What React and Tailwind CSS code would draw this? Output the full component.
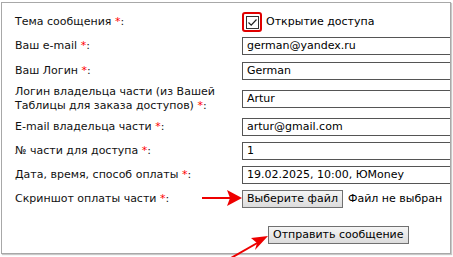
const font = { fontFamily: '"DejaVu Sans", Verdana, sans-serif' };

function Req() {
    return <span className="text-[#ff0000]">*</span>;
}

function Row({ label, children, h = 'h-[18px]' }) {
    return (
        <div className={`grid grid-cols-[227px_1fr] items-center ${h}`}>
            <div className="leading-[14px]">{label}</div>
            <div className="flex items-center whitespace-nowrap">{children}</div>
        </div>
    );
}

function Field({ value }) {
    return (
        <div className="flex h-[18px] w-[260px] shrink-0 items-center border border-[#555] bg-white pl-[4px] text-black">
            {value}
        </div>
    );
}

const btn =
    'flex h-[18px] shrink-0 items-center whitespace-nowrap border border-[#707070] bg-gradient-to-b from-[#f5f5f5] to-[#dcdcdc] px-[4px] text-black';

export default function App() {
    return (
        <div className="relative h-[257px] w-[453px] overflow-hidden bg-white text-[11px] text-[#111]" style={font}>
            <div className="ml-[1px] mt-[2px] h-[252px] w-[450px] overflow-hidden border border-[#a8a8a8] pl-[13px] pt-[9px] shadow-[1px_1px_1px_#c8c8c8]">
                <div className="flex flex-col">
                    <Row label={<>Тема сообщения <Req />:</>} h="h-[20px]">
                        <div className="flex h-[20px] w-[20px] items-center justify-center rounded-[3px] border-2 border-[#e00000]">
                            <div className="flex h-[13px] w-[13px] items-center justify-center border border-[#333] bg-white">
                                <svg width="11" height="11" viewBox="0 0 11 11">
                                    <path d="M1.5 5.5 L4.2 8.2 L9.5 2.5" fill="none" stroke="#222" strokeWidth="1.2" />
                                </svg>
                            </div>
                        </div>
                        <span className="ml-[4px] text-black">Открытие доступа</span>
                    </Row>
                    <div className="mt-[5px]">
                        <Row label={<>Ваш e-mail <Req />:</>}>
                            <Field value="german@yandex.ru" />
                        </Row>
                    </div>
                    <div className="mt-[7px]">
                        <Row label={<>Ваш Логин <Req />:</>}>
                            <Field value="German" />
                        </Row>
                    </div>
                    <div className="mt-[5px]">
                        <Row
                            label={
                                <>
                                    Логин владельца части (из Вашей
                                    <br />
                                    Таблицы для заказа доступов) <Req />:
                                </>
                            }
                            h="h-[28px]"
                        >
                            <Field value="Artur" />
                        </Row>
                    </div>
                    <div className="mt-[5px]">
                        <Row label={<>E-mail владельца части <Req />:</>}>
                            <Field value="artur@gmail.com" />
                        </Row>
                    </div>
                    <div className="mt-[6px]">
                        <Row label={<>№ части для доступа <Req />:</>}>
                            <Field value="1" />
                        </Row>
                    </div>
                    <div className="mt-[6px]">
                        <Row label={<>Дата, время, способ оплаты <Req />:</>}>
                            <Field value="19.02.2025, 10:00, ЮMoney" />
                        </Row>
                    </div>
                    <div className="mt-[6px]">
                        <Row label={<>Скриншот оплаты части <Req />:</>}>
                            <div className={btn}>Выберите файл</div>
                            <span className="ml-[5px] text-black">Файл не выбран</span>
                        </Row>
                    </div>
                    <div className="mt-[18px] pl-[253px]">
                        <div className={`${btn} w-fit`}>Отправить сообщение</div>
                    </div>
                </div>
            </div>
            <svg className="pointer-events-none absolute left-0 top-0" width="453" height="257">
                <line x1="202" y1="198" x2="232" y2="198" stroke="#ee0000" strokeWidth="2" />
                <polygon points="242,198 227,190 230,198 227,206" fill="#ee0000" />
                <line x1="231" y1="258" x2="259" y2="242" stroke="#ee0000" strokeWidth="2" />
                <polygon points="268,236 251,238 257,243 255,250" fill="#ee0000" />
            </svg>
        </div>
    );
}
